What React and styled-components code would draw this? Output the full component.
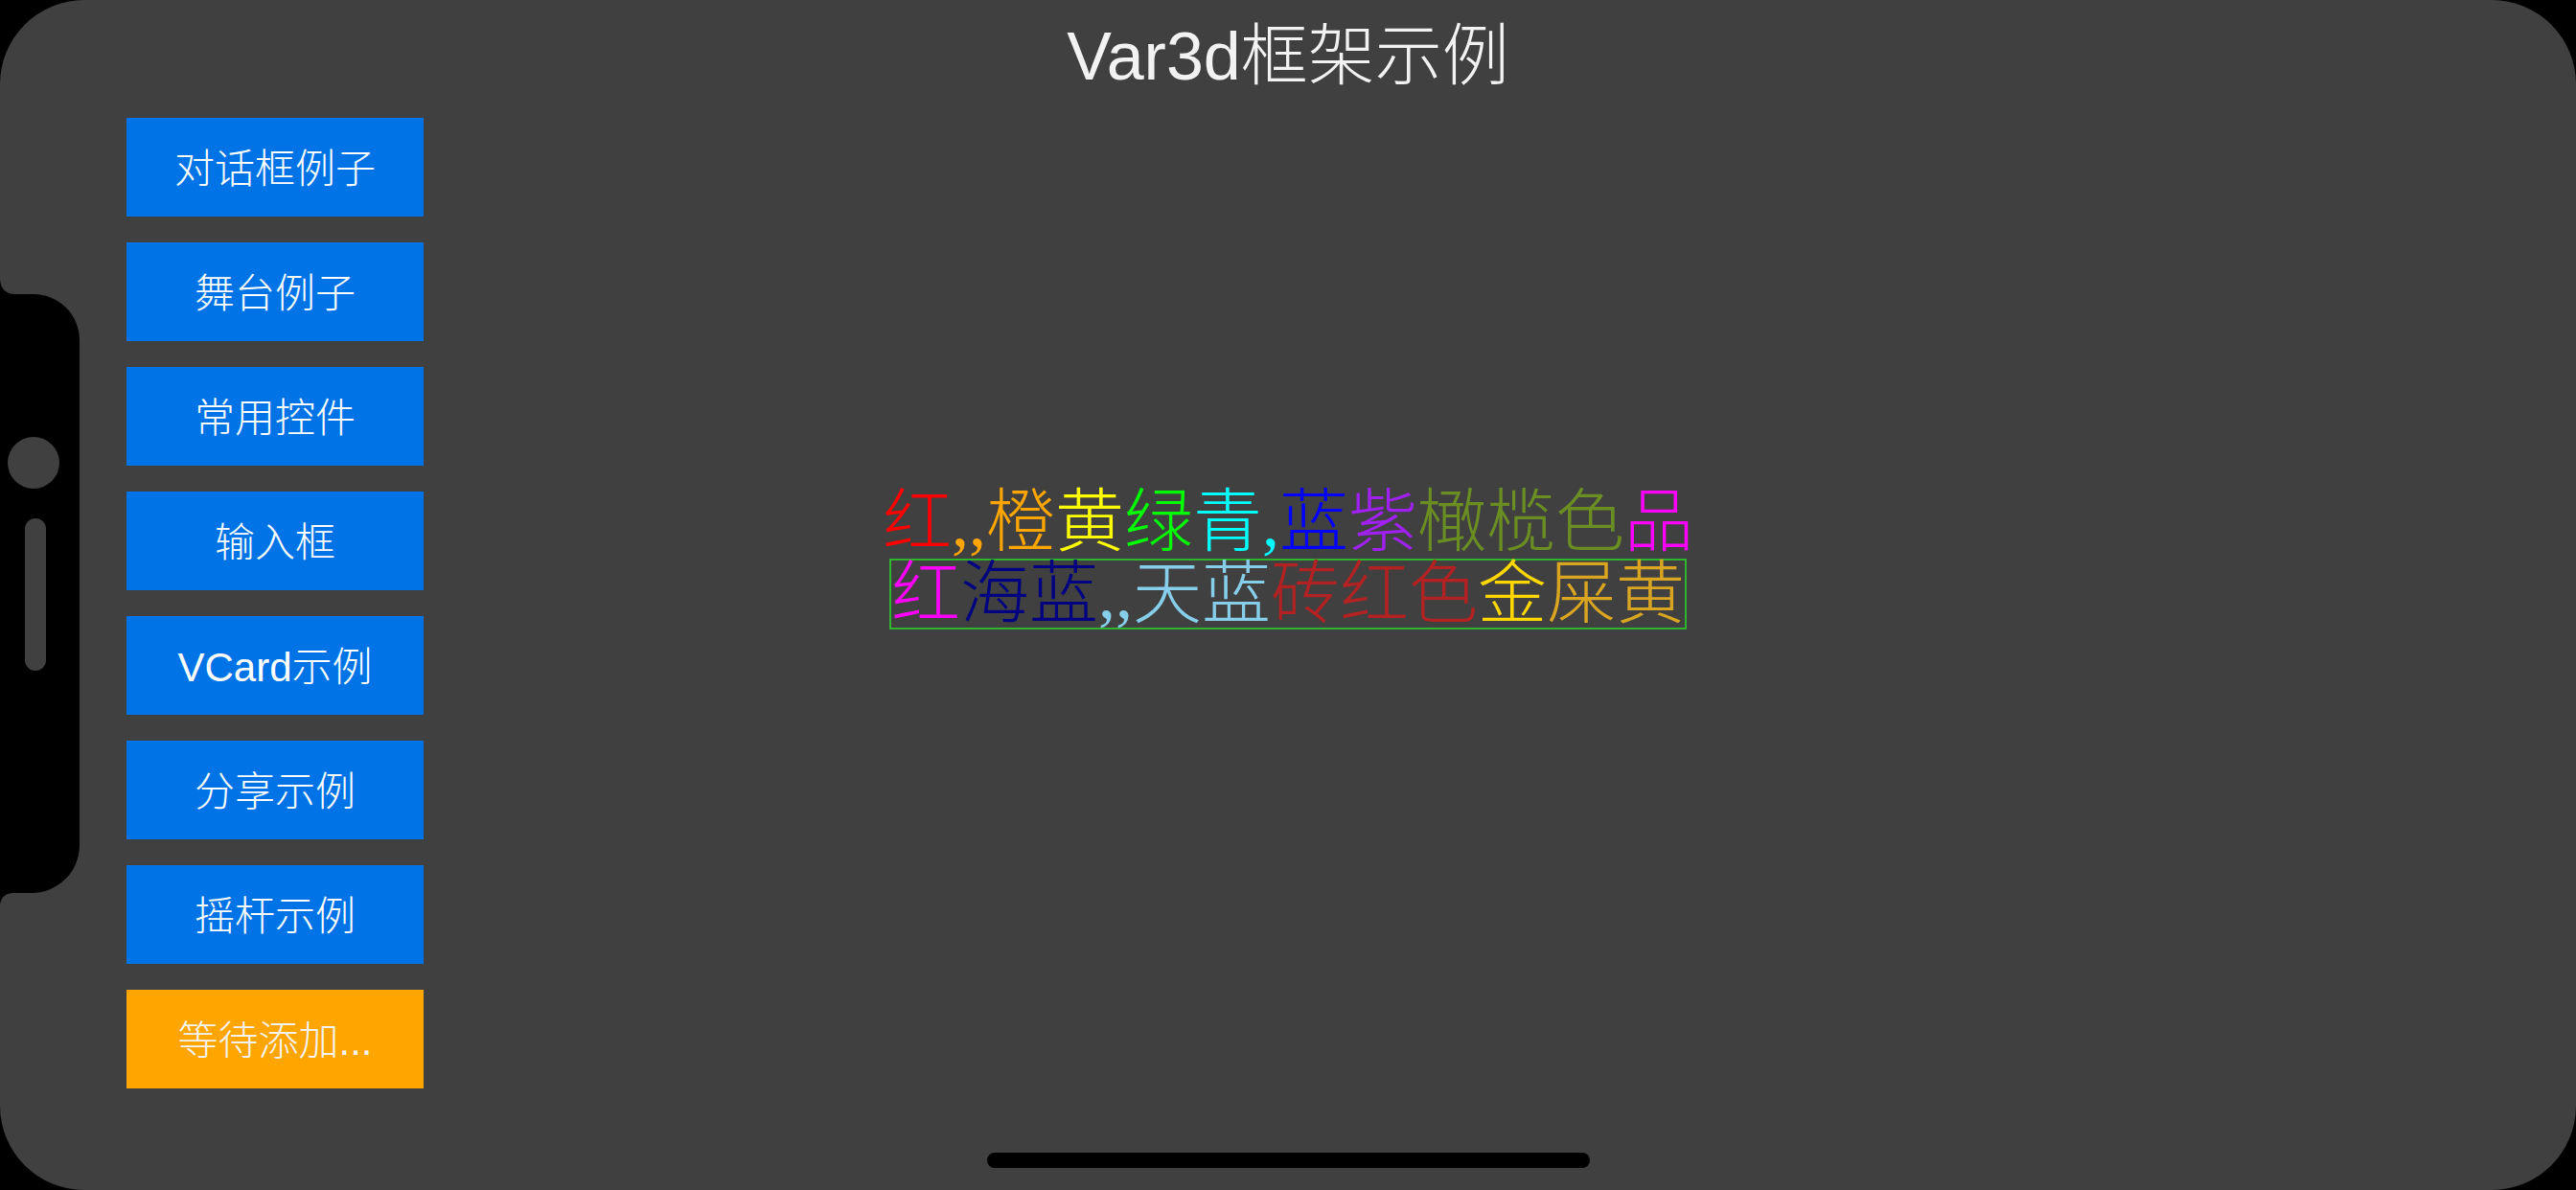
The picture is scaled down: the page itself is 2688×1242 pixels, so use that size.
import React from "react";
import styled, { createGlobalStyle } from "styled-components";

const GlobalStyle = createGlobalStyle`
  html, body {
    margin: 0;
    padding: 0;
    background: #000;
  }
  body {
    font-family: "Liberation Sans", "Noto Sans CJK SC", sans-serif;
  }
`;

const Device = styled.div`
  width: 2688px;
  height: 1242px;
  background: #000;
`;

const Screen = styled.div`
  position: relative;
  width: 100%;
  height: 100%;
  background: #404040;
  border-radius: 88px;
  overflow: hidden;
  display: grid;
  grid-template-rows: 123px 1fr;
`;

const Title = styled.h1`
  margin: 0;
  padding-top: 19px;
  text-align: center;
  font-size: 70px;
  font-weight: 300;
  line-height: 80px;
  color: #f2f2f2;
`;

const Body = styled.div`
  display: grid;
  grid-template-columns: 1fr auto 1fr;
  align-items: start;
`;

const Menu = styled.nav`
  display: flex;
  flex-direction: column;
  gap: 27px;
  padding-left: 132px;
`;

const MenuButton = styled.button`
  width: 310px;
  height: 103px;
  border: 0;
  padding: 0 0 4px;
  background: ${(p) => (p.$pending ? "#ffa500" : "#0073e6")};
  color: ${(p) => (p.$pending ? "#f4f4f4" : "#fff")};
  font-family: inherit;
  font-size: 42px;
  font-weight: 300;
  cursor: pointer;
`;

const Showcase = styled.div`
  margin-top: 382px;
  font-family: "Liberation Serif", "Noto Sans CJK SC", serif;
  font-size: 72px;
  font-weight: 300;
  text-align: center;
`;

const Line = styled.div`
  line-height: 80px;
  white-space: nowrap;
`;

const BoxedLine = styled.div`
  width: fit-content;
  margin: -2px auto 0;
  line-height: 70px;
  border: 2px solid #2db52d;
  white-space: nowrap;
`;

const Run = styled.span`
  color: ${(p) => p.$c};
`;

// notch + home indicator drawn over the screen
const Notch = styled.svg`
  position: absolute;
  left: 0;
  top: 290px;
`;

const HomeBar = styled.div`
  position: absolute;
  left: 50%;
  bottom: 23px;
  width: 629px;
  height: 16px;
  margin-left: -314px;
  border-radius: 8px;
  background: #000;
`;

const menuItems = [
  "对话框例子",
  "舞台例子",
  "常用控件",
  "输入框",
  "VCard示例",
  "分享示例",
  "摇杆示例",
];

const lineOne = [
  ["红", "#f00"],
  [",,橙", "#ffa500"],
  ["黄", "#ffff00"],
  ["绿", "#00ff00"],
  ["青,", "#00ffff"],
  ["蓝", "#0000ff"],
  ["紫", "#a020f0"],
  ["橄榄色", "#6b8e23"],
  ["品", "#ff00ff"],
];

const lineTwo = [
  ["红", "#ff00ff"],
  ["海蓝", "#000080"],
  [",,天蓝", "#87ceeb"],
  ["砖红色", "#b22222"],
  ["金", "#ffd700"],
  ["屎黄", "#daa520"],
];

export default function App() {
  return (
    <Device>
      <GlobalStyle />
      <Screen>
        <Title>Var3d框架示例</Title>
        <Body>
          <Menu>
            {menuItems.map((label) => (
              <MenuButton key={label}>{label}</MenuButton>
            ))}
            <MenuButton $pending>等待添加...</MenuButton>
          </Menu>
          <Showcase>
            <Line>
              {lineOne.map(([t, c], i) => (
                <Run key={i} $c={c}>
                  {t}
                </Run>
              ))}
            </Line>
            <BoxedLine>
              {lineTwo.map(([t, c], i) => (
                <Run key={i} $c={c}>
                  {t}
                </Run>
              ))}
            </BoxedLine>
          </Showcase>
        </Body>

        <Notch width="84" height="656" viewBox="0 0 84 656">
          <path
            d="M0 0 C0 10 5 17 16 17 L35 17 A48 48 0 0 1 83 65 L83 592 A50 50 0 0 1 33 642 L14 642 C5 642 0 648 0 656 Z"
            fill="#000"
          />
          <ellipse cx="35" cy="193" rx="27" ry="27" fill="#404040" />
          <rect x="26" y="251" width="22" height="159" rx="11" fill="#404040" />
        </Notch>
        <HomeBar />
      </Screen>
    </Device>
  );
}
